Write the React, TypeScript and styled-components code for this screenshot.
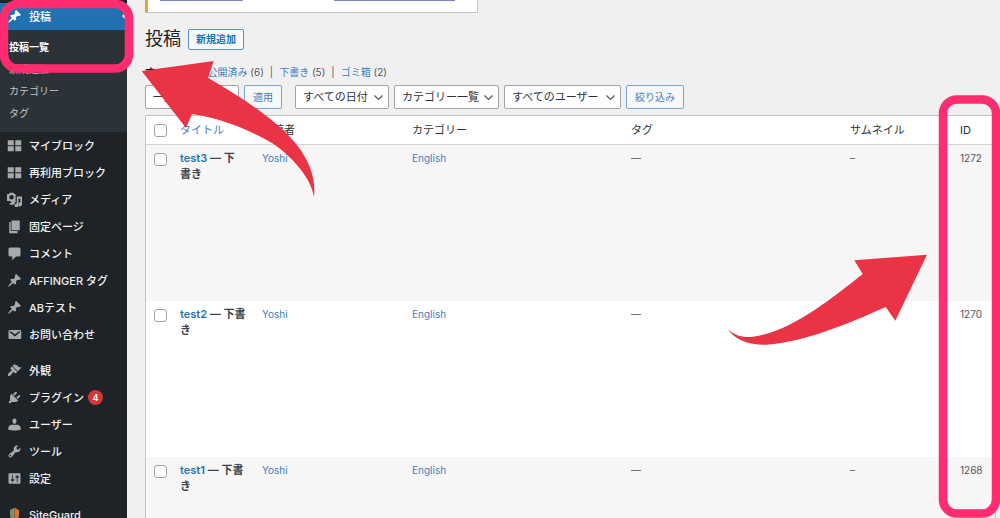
import React from "react";
import styled, { createGlobalStyle, css } from "styled-components";

const Global = createGlobalStyle`
  * { box-sizing: border-box; }
  body {
    margin: 0;
    background: #f0f0f0;
    color: #3c434a;
    font-family: Inter, "Noto Sans CJK JP", sans-serif;
    font-size: 11px;
    line-height: 16px;
  }
  a { color: #3f7fbf; text-decoration: none; }
`;

const Page = styled.div`
  position: relative;
  display: flex;
  height: 100vh;
  overflow: hidden;
`;

const Sidebar = styled.nav`
  flex: 0 0 127px;
  padding-top: 3px;
  background: #1d2327;
  overflow: hidden;
`;

const MenuList = styled.ul`
  list-style: none;
  margin: 0 0 9px;
  padding: 0;
`;

const MenuLink = styled.a<{ $active?: boolean }>`
  position: relative;
  display: flex;
  align-items: center;
  gap: 7px;
  height: 27px;
  padding-left: 7px;
  font-weight: 500;
  color: #f0f0f1;
  white-space: nowrap;
  ${(p) =>
    p.$active &&
    css`
      background: #2271b1;
      color: #fff;
      &::after {
        content: "";
        position: absolute;
        right: 0;
        top: 8px;
        border: 5px solid transparent;
        border-right-color: #f0f0f1;
      }
    `}
`;

const Icon = styled.svg<{ $active?: boolean }>`
  width: 15px;
  height: 15px;
  flex: none;
  fill: ${(p) => (p.$active ? "#fff" : "#a7aaad")};
`;

const Badge = styled.span`
  min-width: 15px;
  height: 15px;
  margin-left: -3px;
  border-radius: 8px;
  background: #d63638;
  color: #fff;
  font-size: 9px;
  line-height: 15px;
  font-weight: 600;
  text-align: center;
`;

const SubMenu = styled.ul`
  list-style: none;
  margin: 0;
  padding: 6px 0 8px;
  background: #2c3338;
`;

const SubLink = styled.a<{ $current?: boolean }>`
  display: block;
  height: 22px;
  padding-left: 9px;
  font-size: 10px;
  line-height: 22px;
  font-weight: ${(p) => (p.$current ? 700 : 400)};
  color: ${(p) => (p.$current ? "#fff" : "#c3c4c7")};
`;

const Main = styled.main`
  flex: 1;
  min-width: 0;
  padding: 0 4px 0 18px;
`;

const Notice = styled.div`
  display: flex;
  gap: 91px;
  width: 333px;
  height: 13px;
  padding-left: 12px;
  background: #fff;
  border: 1px solid #c3c4c7;
  border-top: 0;
  border-left: 3px solid #dba83a;
`;

const LinkRule = styled.span<{ $w: number }>`
  width: ${(p) => p.$w}px;
  height: 1px;
  background: #7d86b8;
`;

const Heading = styled.header`
  display: flex;
  align-items: center;
  gap: 7px;
  height: 24px;
  margin-top: 14px;
`;

const Title = styled.h1`
  margin: 0;
  font-size: 18px;
  line-height: 24px;
  font-weight: 400;
  color: #1d2327;
`;

const AddLink = styled.a`
  height: 21px;
  padding: 0 7px;
  border: 1px solid #5b92c8;
  border-radius: 2px;
  background: #f6f7f7;
  font-size: 10px;
  line-height: 19px;
  font-weight: 600;
  color: #2271b1;
`;

const Views = styled.ul`
  display: flex;
  gap: 6px;
  list-style: none;
  margin: 13px 0 5px;
  padding: 0;
  font-size: 10px;
  color: #50575e;
  white-space: nowrap;
  b { color: #000; }
  li + li::before {
    content: "|";
    margin-right: 6px;
  }
`;

const Filters = styled.form`
  display: flex;
  gap: 5px;
  height: 24px;
  margin-bottom: 6px;
`;

const SelectWrap = styled.label<{ $w: number; $first?: boolean }>`
  position: relative;
  width: ${(p) => p.$w}px;
  margin-left: ${(p) => (p.$first ? 8 : 0)}px;
  svg {
    position: absolute;
    right: 6px;
    top: 8px;
    width: 9px;
    height: 9px;
    fill: none;
    stroke: #50575e;
    stroke-width: 1.2;
    pointer-events: none;
  }
`;

const Select = styled.select`
  appearance: none;
  width: 100%;
  height: 24px;
  padding: 0 7px;
  border: 1px solid #a0a3a7;
  border-radius: 2px;
  background: #fff;
  color: #2c3338;
  font: inherit;
`;

const Button = styled.button`
  height: 24px;
  padding: 0 8px;
  border: 1px solid #7ba4cf;
  border-radius: 2px;
  background: #f6f7f7;
  color: #3f7fbf;
  font: inherit;
  font-size: 10px;
  white-space: nowrap;
`;

const Table = styled.table`
  width: 100%;
  table-layout: fixed;
  border-collapse: separate;
  border-spacing: 0;
  border: 1px solid #c3c4c7;
  background: #fff;
`;

const Th = styled.th`
  height: 29px;
  padding: 0 8px;
  border-bottom: 1px solid #d0d1d3;
  font-weight: 400;
  text-align: left;
  color: #2c3338;
`;

const Row = styled.tr`
  height: 156px;
  &:nth-child(odd) { background: #f6f6f6; }
`;

const Td = styled.td`
  padding: 5px 8px;
  vertical-align: top;
  font-size: 10px;
  color: #50575e;
`;

const TitleCell = styled(Td)`
  font-size: 11px;
  font-weight: 600;
  color: #3c434a;
  white-space: pre;
  a { color: #2271b1; }
`;

const CheckCell = styled(Td)`
  padding: 8px 0 0 8px;
`;

const Check = styled.input`
  appearance: none;
  display: block;
  width: 13px;
  height: 13px;
  margin: 0;
  border: 1px solid #a0a3a7;
  border-radius: 3px;
  background: #fff;
`;

const Annotations = styled.svg`
  position: absolute;
  top: 0;
  width: 315px;
  height: 518px;
  pointer-events: none;
`;
const LeftMarks = styled(Annotations)`
  left: 0;
`;
const RightMarks = styled(Annotations)`
  right: 0;
`;

const icons: Record<string, React.ReactNode> = {
  pin: <path d="M10.44 3.02l1.82-1.82 6.36 6.35-1.83 1.82c-1.05-.68-2.48-.57-3.41.36l-.75.75c-.92.93-1.04 2.35-.35 3.41l-1.83 1.82-2.41-2.41-2.8 2.79c-.42.42-3.38 2.71-3.8 2.29s1.86-3.39 2.28-3.81l2.79-2.79L4.1 9.36l1.83-1.82c1.05.69 2.48.57 3.4-.36l.75-.75c.93-.92 1.05-2.35.36-3.41z" />,
  grid: <path d="M1 3h8v6.500H1zm10 0h8v6.500h-8zM1 11h8v6.500H1zm10 0h8v6.500h-8z" />,
  media: <path fillRule="evenodd" d="M3.500 1L2.700 2.500H0V12h4.500A5 5 0 0 0 6 14.500H3.500V17H9l2.500-4V2.500H9.600L8.700 1zM6 4a3 3 0 1 1 0 6A3 3 0 0 1 6 4zm7 2h7v10.500a2.700 2.700 0 1 1-2.300-2.600V9h-2.400v9a2.600 2.600 0 1 1-2.300-2.600z" />,
  page: <path d="M6 15V2h11v13H6zm-1 1h9v3H3V4h2v12z" />,
  comment: <path d="M4 2h12q.82 0 1.410.59T18 4v8q0 .82-.59 1.410T16 14h-4l-5 5v-5H4q-.82 0-1.410-.59T2 12V4q0-.82.59-1.410T4 2z" />,
  mail: <path d="M3.870 4h13.250C18.370 4 19 4.590 19 5.790v8.420c0 1.190-.63 1.790-1.880 1.790H3.870c-1.250 0-1.880-.6-1.880-1.790V5.790c0-1.200.63-1.790 1.880-1.790zm6.620 8.600l6.740-5.530c.24-.2.430-.66.130-1.070-.29-.41-.82-.42-1.170-.17l-5.700 3.860L4.800 5.830c-.35-.25-.88-.24-1.170.17-.3.41-.11.870.13 1.070z" />,
  brush: <path d="M14.480 11.060L7.410 3.990l1.500-1.500c.5-.56 2.300-.47 3.510.32 1.210.8 1.430 1.280 2.910 2.100 1.180.64 2.450 1.260 4.450.850zm-.71.71L6.700 4.700 4.930 6.470c-.39.39-.39 1.020 0 1.410l1.060 1.060c.39.39.39 1.030 0 1.420-.6.600-1.430 1.110-2.210 1.690-.35.260-.7.530-1.010.84C1.430 14.230.4 16.080 1.400 17.070c.99 1 2.840-.03 4.180-1.360.31-.31.580-.66.850-1.020.57-.78 1.080-1.610 1.690-2.210.39-.39 1.020-.39 1.410 0l1.060 1.060c.39.39 1.020.39 1.410 0z" />,
  plug: <path d="M13.110 4.360L9.870 7.600 8 5.730l3.240-3.240c.35-.34 1.050-.2 1.560.32.52.51.660 1.210.31 1.550zm-8 1.770l.91-1.120 9.010 9.010-1.190.84c-.71.71-2.630 1.160-3.820 1.160H6.140L4.900 17.260c-.59.59-1.540.59-2.120 0-.59-.58-.59-1.530 0-2.120l1.240-1.240v-3.880c0-1.130.4-3.190 1.090-3.890zm7.260 3.970l3.240-3.240c.34-.35 1.040-.21 1.550.31.520.51.660 1.210.31 1.550l-3.240 3.250z" />,
  user: <path d="M10 9.250c-2.270 0-2.730-3.440-2.730-3.440C7 4.020 7.820 2 9.970 2c2.160 0 2.980 2.020 2.710 3.810 0 0-.41 3.440-2.680 3.440zM6.500 10.200h7c2.390 0 4.740 2.130 4.740 4.330v2.490s-4.650 1.130-8.240 1.130c-3.650 0-8.240-1.130-8.240-1.130v-2.490c0-2.250 2.340-4.330 4.740-4.330z" />,
  wrench: <path d="M16.680 9.770c-1.340 1.340-3.300 1.670-4.950.99l-5.410 6.520c-.99.99-2.590.99-3.580 0s-.99-2.590 0-3.570l6.520-5.420c-.68-1.650-.35-3.610.99-4.950 1.280-1.280 3.120-1.620 4.720-1.060l-2.890 2.890 2.820 2.820 2.860-2.870c.53 1.580.18 3.390-1.080 4.650zM3.810 16.210c.4.390 1.040.39 1.430 0 .4-.4.400-1.040 0-1.430-.39-.4-1.030-.4-1.430 0-.39.390-.39 1.030 0 1.430z" />,
  settings: <path fillRule="evenodd" d="M18 16V4c0-.55-.45-1-1-1H3c-.55 0-1 .45-1 1v12c0 .55.450 1 1 1h14c.55 0 1-.45 1-1zM8 11h1c.55 0 1 .45 1 1s-.45 1-1 1H8v1.500c0 .28-.22.5-.5.5s-.5-.22-.5-.5V13H6c-.55 0-1-.45-1-1s.45-1 1-1h1V5.500c0-.28.220-.5.500-.5s.5.220.500.500V11zm5-2h-1c-.55 0-1-.45-1-1s.45-1 1-1h1V5.500c0-.28.220-.5.500-.5s.5.220.500.500V7h1c.55 0 1 .45 1 1s-.45 1-1 1h-1v5.500c0 .28-.22.500-.5.500s-.5-.22-.5-.5V9z" />,
  shield: (
    <>
      <path fill="#7d8c6c" d="M10 1L4 4v7c0 4 3 6 6 8z" />
      <path fill="#d9722e" d="M10 1l6 3v7c0 4-3 6-6 8z" />
    </>
  ),
};

type Item = { icon: string; label: string; badge?: number };

const contentItems: Item[] = [
  { icon: "grid", label: "マイブロック" },
  { icon: "grid", label: "再利用ブロック" },
  { icon: "media", label: "メディア" },
  { icon: "page", label: "固定ページ" },
  { icon: "comment", label: "コメント" },
  { icon: "pin", label: "AFFINGER タグ" },
  { icon: "pin", label: "ABテスト" },
  { icon: "mail", label: "お問い合わせ" },
];

const adminItems: Item[] = [
  { icon: "brush", label: "外観" },
  { icon: "plug", label: "プラグイン", badge: 4 },
  { icon: "user", label: "ユーザー" },
  { icon: "wrench", label: "ツール" },
  { icon: "settings", label: "設定" },
];

const subItems = ["投稿一覧", "新規追加", "カテゴリー", "タグ"];

const views = [
  { label: "公開済み", count: 6 },
  { label: "下書き", count: 5 },
  { label: "ゴミ箱", count: 2 },
];

const posts = [
  { title: "test3", state: " — 下\n書き", id: 1272 },
  { title: "test2", state: " — 下書\nき", id: 1270 },
  { title: "test1", state: " — 下書\nき", id: 1268 },
];

function MenuEntry({ icon, label, badge, active }: Item & { active?: boolean }) {
  return (
    <MenuLink href="#" $active={active}>
      <Icon viewBox="0 0 20 20" $active={active} aria-hidden="true">
        {icons[icon]}
      </Icon>
      {label}
      {badge && <Badge>{badge}</Badge>}
    </MenuLink>
  );
}

function Dropdown({ label, text, width, first }: { label: string; text: string; width: number; first?: boolean }) {
  return (
    <SelectWrap $w={width} $first={first}>
      <Select aria-label={label}>
        <option>{text}</option>
      </Select>
      <svg viewBox="0 0 9 9" aria-hidden="true">
        <path d="M0.500 2.500l4 4 4-4" />
      </svg>
    </SelectWrap>
  );
}

export default function App() {
  return (
    <Page>
      <Global />
      <Sidebar>
        <MenuEntry icon="pin" label="投稿" active />
        <SubMenu>
          {subItems.map((s, i) => (
            <li key={s}>
              <SubLink href="#" $current={i === 0}>{s}</SubLink>
            </li>
          ))}
        </SubMenu>
        <MenuList>
          {contentItems.map((m) => (
            <li key={m.label}><MenuEntry {...m} /></li>
          ))}
        </MenuList>
        <MenuList>
          {adminItems.map((m) => (
            <li key={m.label}><MenuEntry {...m} /></li>
          ))}
        </MenuList>
        <MenuEntry icon="shield" label="SiteGuard" />
      </Sidebar>

      <Main>
        <Notice>
          <LinkRule $w={83} />
          <LinkRule $w={121} />
        </Notice>
        <Heading>
          <Title>投稿</Title>
          <AddLink href="#">新規追加</AddLink>
        </Heading>
        <Views>
          <li><b>すべて</b> (11)</li>
          {views.map((v) => (
            <li key={v.label}>
              <a href="#">{v.label}</a> ({v.count})
            </li>
          ))}
        </Views>
        <Filters onSubmit={(e) => e.preventDefault()}>
          <Dropdown label="一括操作" text="一括操作" width={94} />
          <Button type="button">適用</Button>
          <Dropdown label="日付" text="すべての日付" width={94} first />
          <Dropdown label="カテゴリー" text="カテゴリー一覧" width={105} />
          <Dropdown label="ユーザー" text="すべてのユーザー" width={117} />
          <Button type="submit">絞り込み</Button>
        </Filters>
        <Table>
          <colgroup>
            <col width="26" />
            <col width="82" />
            <col width="150" />
            <col />
            <col />
            <col width="110" />
            <col width="43" />
          </colgroup>
          <thead>
            <tr>
              <Th><Check type="checkbox" aria-label="すべて選択" /></Th>
              <Th><a href="#">タイトル</a></Th>
              <Th>投稿者</Th>
              <Th>カテゴリー</Th>
              <Th>タグ</Th>
              <Th>サムネイル</Th>
              <Th>ID</Th>
            </tr>
          </thead>
          <tbody>
            {posts.map((p) => (
              <Row key={p.id}>
                <CheckCell><Check type="checkbox" aria-label={p.title} /></CheckCell>
                <TitleCell><a href="#">{p.title}</a>{p.state}</TitleCell>
                <Td><a href="#">Yoshi</a></Td>
                <Td><a href="#">English</a></Td>
                <Td>—</Td>
                <Td>–</Td>
                <Td>{p.id}</Td>
              </Row>
            ))}
          </tbody>
        </Table>
      </Main>

      <LeftMarks viewBox="0 0 315 518" aria-hidden="true">
        <rect x="4" y="4" width="125" height="64.500" rx="14" fill="none" stroke="#ff2d6f" strokeWidth="8.500" />
        <path fill="#ea3345" d="M141.700 71L213.700 61L208 77.700C232 92 250 103 265 115C288 132 318 160 314 197C311 176 287 150 263 138C240 126 215 117 192 114L186 128Z" />
      </LeftMarks>
      <RightMarks viewBox="685 0 315 518" aria-hidden="true">
        <rect x="943" y="99.500" width="53" height="414" rx="14" fill="none" stroke="#ff2d6f" strokeWidth="8.500" />
        <path fill="#ea3345" d="M927 254.700L895.300 320.700L885.700 307C850 323 805 342 766.700 344.700C750 345 736 341 727.700 329C735 336 744 338 753 336.700C790 332 830 300 862.700 274L854.300 260.300Z" />
      </RightMarks>
    </Page>
  );
}
